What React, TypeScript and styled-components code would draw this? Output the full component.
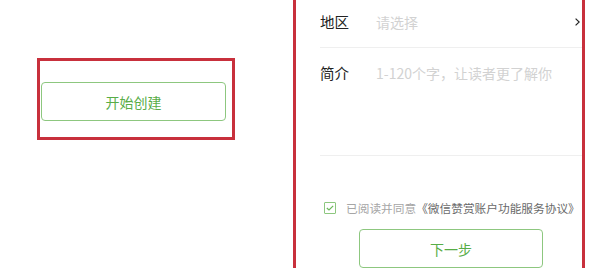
import styled, { createGlobalStyle } from 'styled-components';
import React from 'react';

const GlobalStyle = createGlobalStyle`
    html, body {
        margin: 0;
        padding: 0;
        background: #ffffff;
    }
    body {
        font-family: "Noto Sans CJK SC", "Noto Sans", sans-serif;
        overflow: hidden;
    }
`

const Page = styled.div`
    display: flex;
    width: 596px;
    height: 268px;
    overflow: hidden;
`

const LeftPane = styled.div`
    width: 256px;
    padding: 58px 0 0 37px;
`

const Highlight = styled.div`
    width: 191px;
    height: 55px;
    border: 3px solid #c8303c;
    padding: 21px 0 0 1px;
    box-sizing: content-box;
`

const GreenButton = styled.button<{ $width: number }>`
    display: flex;
    align-items: center;
    justify-content: center;
    width: ${p => p.$width}px;
    height: 39px;
    box-sizing: border-box;
    border: 1px solid #8dc77f;
    border-radius: 4px;
    background: #ffffff;
    color: #58ad47;
    font-family: "Noto Sans CJK SC", sans-serif;
    font-size: 14px;
    padding: 0;
`

const RightPanel = styled.div`
    width: 286px;
    height: 300px;
    border-left: 3px solid #c8303c;
    border-right: 3px solid #c8303c;
    display: flex;
    flex-direction: column;
`

const Row = styled.div<{ $height: number }>`
    display: flex;
    align-items: flex-start;
    margin-left: 24px;
    height: ${p => p.$height}px;
    box-sizing: border-box;
    border-bottom: 1px solid #efefef;
`

const Label = styled.span`
    width: 56px;
    font-size: 14.5px;
    color: #222;
    line-height: 20px;
`

const Placeholder = styled.span`
    flex: 1;
    font-size: 14px;
    color: #d2d2d2;
    line-height: 20px;
`

const Chevron = styled.svg`
    margin: 6px 2px 0 0;
`

const Agreement = styled.div`
    display: flex;
    align-items: center;
    margin: 45px 0 0 28px;
    font-size: 11.7px;
    line-height: 14px;
    white-space: nowrap;
`

const Check = styled.span`
    width: 10px;
    height: 10px;
    border: 1px solid #8dc77f;
    border-radius: 1px;
    display: flex;
    align-items: center;
    justify-content: center;
    margin-right: 10px;
`

const Muted = styled.span`
    color: #a6a6a6;
`

const Title = styled.span`
    color: #6a6a6a;
`

const Footer = styled.div`
    display: flex;
    padding: 14px 0 0 63px;
`

const App = () => {
    return <>
        <GlobalStyle />
        <Page>
            <LeftPane>
                <Highlight>
                    <GreenButton $width={185}>开始创建</GreenButton>
                </Highlight>
            </LeftPane>
            <RightPanel>
                <Row $height={48} style={{ paddingTop: 12 }}>
                    <Label>地区</Label>
                    <Placeholder>请选择</Placeholder>
                    <Chevron width="5" height="8" viewBox="0 0 5 8">
                        <path d="M0.6 0.6 L4.2 4 L0.6 7.4" fill="none" stroke="#222" strokeWidth="1.2" />
                    </Chevron>
                </Row>
                <Row $height={108} style={{ paddingTop: 15 }}>
                    <Label>简介</Label>
                    <Placeholder>1-120个字，让读者更了解你</Placeholder>
                </Row>
                <Agreement>
                    <Check>
                        <svg width="8" height="6" viewBox="0 0 8 6">
                            <path d="M0.8 3 L3 5 L7.2 0.8" fill="none" stroke="#6bb85a" strokeWidth="1.2" />
                        </svg>
                    </Check>
                    <Muted>已阅读并同意</Muted>
                    <Title>《微信赞赏账户功能服务协议》</Title>
                </Agreement>
                <Footer>
                    <GreenButton $width={184}>下一步</GreenButton>
                </Footer>
            </RightPanel>
        </Page>
    </>;
}

export default App
